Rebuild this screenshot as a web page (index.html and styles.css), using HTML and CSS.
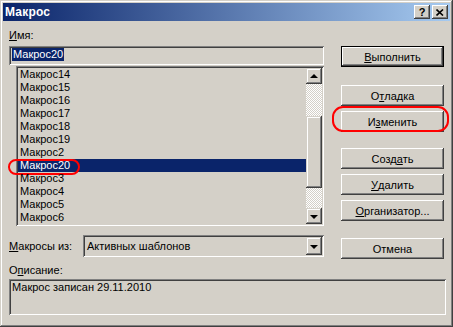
FILE: index.html
```html
<!DOCTYPE html>
<html lang="ru">
<head>
<meta charset="utf-8">
<title>Макрос</title>
<link rel="stylesheet" href="styles.css">
</head>
<body>
<div class="window">
  <div class="titlebar">
    <span class="title">Макрос</span>
    <div class="tbtns">
      <span class="tbtn help">?</span>
      <span class="tbtn close"><svg width="8" height="7" viewBox="0 0 8 7"><path d="M0.5 0.5 L7 6.5 M7 0.5 L0.5 6.5" stroke="#000" stroke-width="1.6" fill="none"/></svg></span>
    </div>
  </div>
  <div class="content">
    <div class="top">
      <div class="left">
        <div class="label name-label"><u>И</u>мя:</div>
        <div class="field name-field"><span class="sel">Макрос20</span></div>
        <div class="list">
          <div class="rows">
            <div class="row">Макрос14</div>
            <div class="row">Макрос15</div>
            <div class="row">Макрос16</div>
            <div class="row">Макрос17</div>
            <div class="row">Макрос18</div>
            <div class="row">Макрос19</div>
            <div class="row">Макрос2</div>
            <div class="row selected">Макрос20<span class="ring ring-row"></span></div>
            <div class="row">Макрос3</div>
            <div class="row">Макрос4</div>
            <div class="row">Макрос5</div>
            <div class="row">Макрос6</div>
          </div>
          <div class="vscroll">
            <div class="sbtn"><span class="arrow up"></span></div>
            <div class="track t1"></div>
            <div class="thumb"></div>
            <div class="track t2"></div>
            <div class="sbtn"><span class="arrow down"></span></div>
          </div>
        </div>
        <div class="combo-row">
          <div class="label combo-label"><u>М</u>акросы из:</div>
          <div class="combo">
            <span class="combo-text">Активных шаблонов</span>
            <div class="sbtn combo-btn"><span class="arrow down"></span></div>
          </div>
        </div>
      </div>
      <div class="right">
        <div class="btn default b-run"><u>В</u>ыполнить</div>
        <div class="btn b-debug">О<u>т</u>ладка</div>
        <div class="btn-wrap b-edit">
          <div class="btn">И<u>з</u>менить</div>
          <span class="ring ring-btn"></span>
        </div>
        <div class="btn b-create">Созд<u>а</u>ть</div>
        <div class="btn b-del"><u>У</u>далить</div>
        <div class="btn b-org"><u>О</u>рганизатор...</div>
        <div class="btn b-cancel">Отмена</div>
      </div>
    </div>
    <div class="label desc-label">О<u>п</u>исание:</div>
    <div class="field desc">Макрос записан 29.11.2010</div>
  </div>
</div>
</body>
</html>
```
FILE: styles.css
```css
* { box-sizing: border-box; }
body {
  margin: 0;
  font-family: "Liberation Sans", Arial, sans-serif;
  font-size: 11px;
  color: #000;
  background: #d4d0c8;
}
u { text-decoration: underline; text-underline-offset: 1px; }

.window {
  width: 453px;
  height: 327px;
  padding: 3px;
  background: #d4d0c8;
  box-shadow: inset -1px -1px #404040, inset 1px 1px #d4d0c8,
              inset -2px -2px #808080, inset 2px 2px #ffffff;
}

.titlebar {
  height: 18px;
  display: flex;
  align-items: center;
  justify-content: space-between;
  padding: 0 2px 0 2px;
  background: linear-gradient(to right, #0a246a, #a6caf0);
}
.title {
  color: #fff;
  font-weight: bold;
  font-size: 12px;
  letter-spacing: 0.2px;
}
.tbtns { display: flex; gap: 2px; }
.tbtn {
  width: 16px;
  height: 14px;
  display: flex;
  align-items: center;
  justify-content: center;
  background: #d4d0c8;
  font-weight: bold;
  font-size: 11px;
  box-shadow: inset -1px -1px #404040, inset 1px 1px #ffffff,
              inset -2px -2px #808080, inset 2px 2px #d4d0c8;
}

.content { padding: 0 6px; }
.top { display: flex; }
.left { width: 315px; display: flex; flex-direction: column; }
.right { width: 103px; margin-left: 17px; display: flex; flex-direction: column; }

.label { line-height: 13px; height: 13px; white-space: nowrap; }
.name-label { margin-top: 8px; }

.field {
  background: #d4d0c8;
  box-shadow: inset 1px 1px #808080, inset -1px -1px #ffffff,
              inset 2px 2px #404040, inset -2px -2px #d4d0c8;
}
.name-field {
  margin-top: 4px;
  height: 19px;
  padding: 2px 0 0 3px;
}
.sel {
  display: inline-block;
  background: #0a246a;
  color: #fff;
  line-height: 13px;
  padding: 0 1px;
}

.list {
  margin-top: 1px;
  margin-left: 7px;
  width: 308px;
  height: 160px;
  padding: 2px;
  display: flex;
  box-shadow: inset 1px 1px #808080, inset -1px -1px #ffffff,
              inset 2px 2px #404040, inset -2px -2px #d4d0c8;
}
.rows { flex: 1; }
.row {
  height: 13px;
  line-height: 13px;
  padding-left: 2px;
  position: relative;
  white-space: nowrap;
}
.row.selected { background: #0a246a; color: #fff; }

.vscroll { width: 16px; display: flex; flex-direction: column; }
.sbtn {
  width: 16px;
  height: 16px;
  flex: none;
  display: flex;
  align-items: center;
  justify-content: center;
  background: #d4d0c8;
  box-shadow: inset -1px -1px #404040, inset 1px 1px #d4d0c8,
              inset -2px -2px #808080, inset 2px 2px #ffffff;
}
.track {
  background-color: #d4d0c8;
  background-image: repeating-conic-gradient(#ffffff 0 25%, #d4d0c8 0 50%);
  background-size: 2px 2px;
}
.t1 { height: 32px; }
.t2 { height: 20px; }
.thumb {
  height: 72px;
  background: #d4d0c8;
  box-shadow: inset -1px -1px #404040, inset 1px 1px #d4d0c8,
              inset -2px -2px #808080, inset 2px 2px #ffffff;
}
.arrow { width: 0; height: 0; border-left: 4px solid transparent; border-right: 4px solid transparent; }
.arrow.up { border-bottom: 4px solid #000; margin-top: -1px; }
.arrow.down { border-top: 4px solid #000; margin-top: 1px; }

.combo-row {
  margin-top: 9px;
  height: 22px;
  display: flex;
  align-items: center;
}
.combo-label { width: 74px; }
.combo {
  width: 241px;
  height: 22px;
  padding: 2px;
  display: flex;
  align-items: center;
  background: #d4d0c8;
  box-shadow: inset 1px 1px #808080, inset -1px -1px #ffffff,
              inset 2px 2px #404040, inset -2px -2px #d4d0c8;
}
.combo-text { flex: 1; padding-left: 2px; }
.combo-btn { height: 18px; }

.btn {
  height: 21px;
  display: flex;
  align-items: center;
  justify-content: center;
  background: #d4d0c8;
  white-space: nowrap;
  box-shadow: inset -1px -1px #404040, inset 1px 1px #ffffff,
              inset -2px -2px #808080, inset 2px 2px #d4d0c8;
}
.btn.default {
  border: 1px solid #000;
}
.b-run { margin-top: 25px; }
.b-debug { margin-top: 18px; }
.b-edit { margin-top: 5px; position: relative; }
.b-create { margin-top: 16px; }
.b-del { margin-top: 5px; }
.b-org { margin-top: 5px; }
.b-cancel { margin-top: 17px; }

.ring {
  position: absolute;
  border: 2px solid #f00;
  pointer-events: none;
}
.ring-btn {
  top: -5px;
  left: -9px;
  width: 117px;
  height: 26px;
  border-radius: 11px;
}
.ring-row {
  top: 0px;
  left: -10px;
  width: 72px;
  height: 16px;
  border-radius: 8px;
}

.desc-label { margin-top: 5px; }
.desc {
  margin-top: 2px;
  width: 437px;
  height: 36px;
  padding: 2px 3px;
  line-height: 13px;
}
```
